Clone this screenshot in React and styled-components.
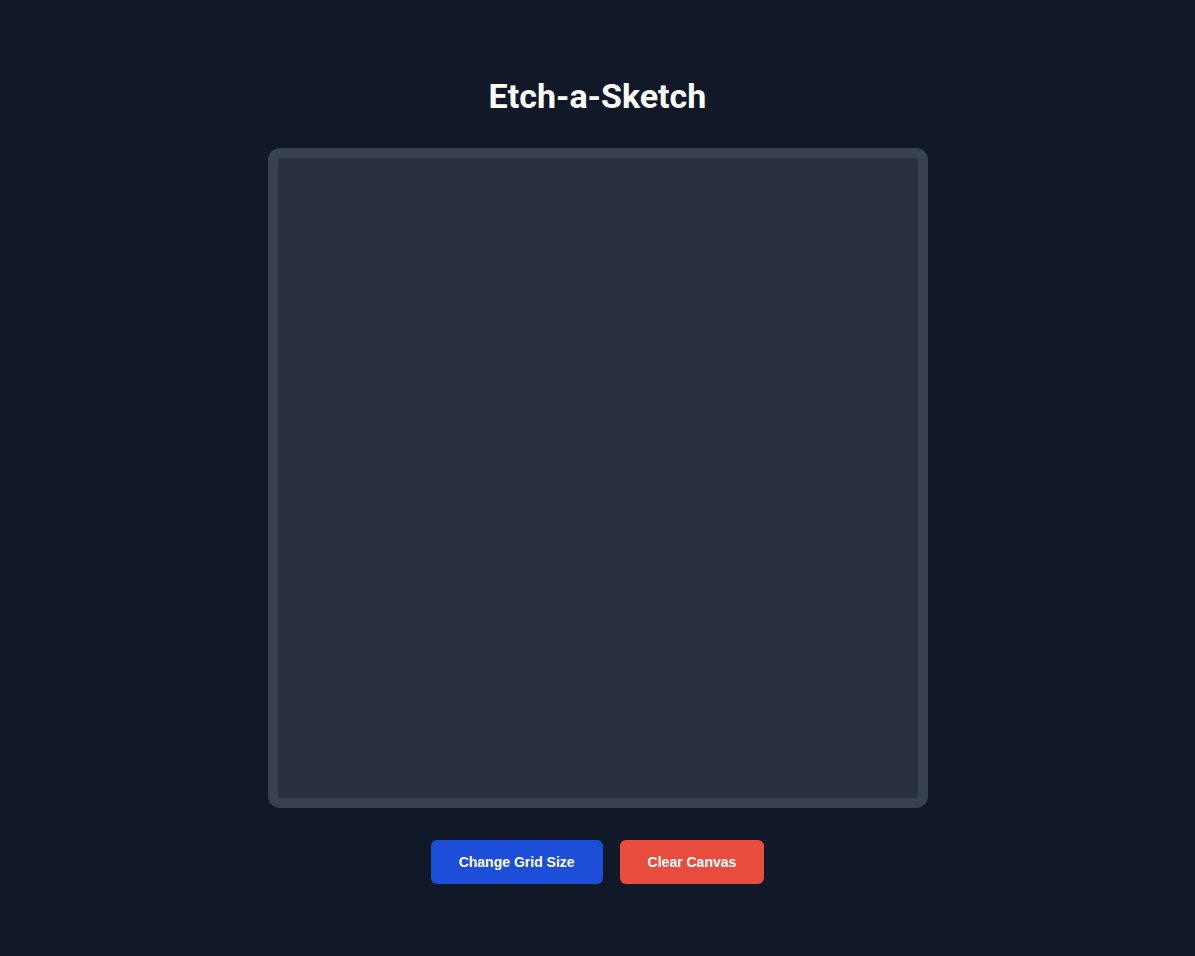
import React from 'react'
import styled, { createGlobalStyle } from 'styled-components'

const GlobalStyle = createGlobalStyle`
    html, body {
        margin: 0;
        padding: 0;
        background-color: #111827;
    }
    body {
        font-family: Roboto, "Liberation Sans", Arial, sans-serif;
        color: #ffffff;
    }
`
const Page = styled.div`
    min-height: 956px;
    display: flex;
    flex-direction: column;
    align-items: center;
    padding-top: 76px;
    box-sizing: border-box;
`
const Title = styled.h1`
    margin: 0;
    font-family: Roboto, "Liberation Sans", sans-serif;
    font-size: 34px;
    font-weight: 700;
    line-height: 40px;
    color: #ffffff;
`
const Board = styled.div`
    margin-top: 32px;
    width: 640px;
    height: 640px;
    border: 10px solid #374151;
    border-radius: 12px;
    background-color: #374151;
    display: grid;
    grid-template-columns: repeat(${({ size }) => size}, 1fr);
`
const Canvas = styled.div`
    grid-column: 1 / -1;
    background-color: #29303d;
    border-radius: 4px;
`
const Controls = styled.div`
    margin-top: 32px;
    display: flex;
    gap: 17px;
`
const Button = styled.button`
    height: 44px;
    padding: 0 28px;
    border: none;
    border-radius: 6px;
    background-color: ${({ variant }) => variant === 'danger' ? '#e74c3c' : '#1d4ed8'};
    color: #ffffff;
    font-family: "Liberation Sans", Arial, sans-serif;
    font-size: 14px;
    font-weight: 700;
    cursor: pointer;
`

export default function App() {
    return (
        <>
            <GlobalStyle />
            <Page>
                <Title>Etch-a-Sketch</Title>
                <Board size={1}>
                    <Canvas />
                </Board>
                <Controls>
                    <Button>Change Grid Size</Button>
                    <Button variant="danger">Clear Canvas</Button>
                </Controls>
            </Page>
        </>
    )
}
